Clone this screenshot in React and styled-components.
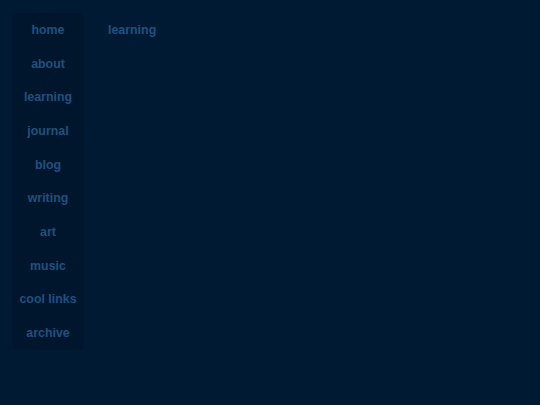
import React from "react";
import styled, { createGlobalStyle } from "styled-components";

const GlobalStyle = createGlobalStyle`
  html, body {
    margin: 0;
    padding: 0;
    background: #011a34;
  }
  body {
    font-family: "Liberation Sans", Arial, sans-serif;
  }
`;

const links = [
  "home",
  "about",
  "learning",
  "journal",
  "blog",
  "writing",
  "art",
  "music",
  "cool links",
  "archive",
];

const App = () => {
  return (
    <>
      <GlobalStyle />
      <Page>
        <Sidebar>
          {links.map((l) => (
            <NavLink key={l} href="#">
              {l}
            </NavLink>
          ))}
        </Sidebar>
        <Main>
          <Title>learning</Title>
        </Main>
      </Page>
    </>
  );
};

const Page = styled.div`
  display: flex;
  align-items: flex-start;
  gap: 25px;
  padding: 13px;
  min-height: 405px;
  box-sizing: border-box;
`;

const Sidebar = styled.nav`
  width: 70px;
  display: flex;
  flex-direction: column;
  background: #00162d;
`;

const NavLink = styled.a`
  display: flex;
  align-items: center;
  justify-content: center;
  height: 33.7px;
  color: #21507f;
  font-weight: 700;
  font-size: 12.4px;
  text-decoration: none;
  white-space: nowrap;
`;

const Main = styled.main`
  flex: 1;
`;

const Title = styled.div`
  height: 33.7px;
  display: flex;
  align-items: center;
  color: #21507f;
  font-weight: 700;
  font-size: 12.4px;
`;

export default App;
